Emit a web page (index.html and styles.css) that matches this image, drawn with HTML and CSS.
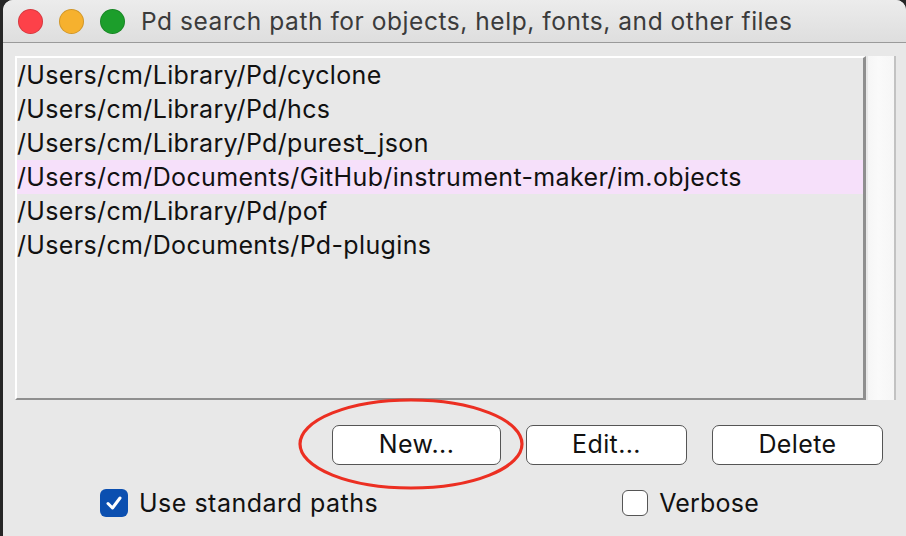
FILE: index.html
```html
<!DOCTYPE html>
<html>
<head>
<meta charset="utf-8">
<link rel="stylesheet" href="styles.css">
</head>
<body>
<div class="window">
  <div class="titlebar">
    <div class="lights">
      <span class="light red"></span>
      <span class="light yellow"></span>
      <span class="light green"></span>
    </div>
    <div class="title">Pd search path for objects, help, fonts, and other files</div>
  </div>
  <div class="content">
    <div class="listarea">
      <div class="listbox">
        <div class="row">/Users/cm/Library/Pd/cyclone</div>
        <div class="row">/Users/cm/Library/Pd/hcs</div>
        <div class="row">/Users/cm/Library/Pd/purest_json</div>
        <div class="row selected">/Users/cm/Documents/GitHub/instrument-maker/im.objects</div>
        <div class="row">/Users/cm/Library/Pd/pof</div>
        <div class="row">/Users/cm/Documents/Pd-plugins</div>
      </div>
      <div class="scrollbar"></div>
    </div>
    <div class="buttons">
      <button class="btn btn-new">New...</button>
      <button class="btn btn-edit">Edit...</button>
      <button class="btn btn-delete">Delete</button>
    </div>
    <div class="checks">
      <label class="check check-std"><span class="box checked"><svg viewBox="0 0 28 28" width="28" height="28"><path d="M8 14.5 L12.5 19 L20 9" fill="none" stroke="#fff" stroke-width="3" stroke-linecap="round" stroke-linejoin="round"/></svg></span>Use standard paths</label>
      <label class="check check-verbose"><span class="box"></span>Verbose</label>
    </div>
    <svg class="annot" width="240" height="100" viewBox="0 0 240 100"><ellipse cx="120" cy="50" rx="111" ry="44" fill="none" stroke="#ec2f22" stroke-width="3.2"/></svg>
  </div>
</div>
</body>
</html>
```
FILE: styles.css
```css
html, body {
  margin: 0;
  padding: 0;
  background: #262626;
  width: 906px;
  height: 536px;
  overflow: hidden;
}
.window {
  margin-left: 3px;
  width: 903px;
  height: 536px;
  background: #e8e8e8;
  border-radius: 10px 10px 0 0;
  overflow: hidden;
  font-family: Inter, "Liberation Sans", sans-serif;
  color: #111;
}
.titlebar {
  height: 42px;
  border-bottom: 1px solid #9a9a9a;
  background: linear-gradient(#ececec, #dedede);
  display: flex;
  align-items: center;
}
.lights {
  display: flex;
  gap: 16px;
  margin-left: 15px;
}
.light {
  width: 23px;
  height: 23px;
  border-radius: 50%;
  border: 0.5px solid rgba(0,0,0,0.15);
}
.red { background: #fd4149; }
.yellow { background: #f6b12e; }
.green { background: #1c9e2b; }
.title {
  margin-left: 16px;
  font-size: 24.5px;
  color: #3b3b3b;
  letter-spacing: 0.55px;
}
.content {
  position: relative;
  padding: 13px 10px 0 12px;
}
.listarea {
  display: flex;
  height: 344px;
}
.listbox {
  width: 851px;
  border-top: 2px solid #ffffff;
  border-left: 2px solid #ffffff;
  border-right: 3px solid #8f8f8f;
  border-bottom: 2px solid #8f8f8f;
  box-sizing: border-box;
  height: 344px;
}
.row {
  height: 34px;
  line-height: 34px;
  font-size: 25px;
  letter-spacing: 0.35px;
  white-space: nowrap;
  color: #111;
}
.row.selected {
  background: #f6e0fa;
}
.scrollbar {
  margin-left: 2px;
  width: 26px;
  height: 344px;
  background: linear-gradient(90deg, #f6f6f6, #fafafa 40%, #f6f6f6);
  border-right: 2px solid #c2c2c2;
}
.buttons {
  display: flex;
  gap: 25px;
  margin-top: 25px;
  margin-left: 317px;
}
.btn {
  height: 40px;
  background: #fff;
  border: 1.5px solid #555;
  border-radius: 7px;
  font-family: Inter, "Liberation Sans", sans-serif;
  font-size: 25px;
  letter-spacing: 0.4px;
  color: #111;
  padding: 0 0 2px 0;
}
.btn-new { width: 169px; }
.btn-edit { width: 161px; }
.btn-delete { width: 171px; }
.checks {
  display: flex;
  margin-top: 23px;
  margin-left: 85px;
}
.check {
  display: flex;
  align-items: center;
  gap: 11px;
  font-size: 25px;
  letter-spacing: 0.5px;
  color: #111;
}
.check-verbose {
  margin-left: 244px;
  letter-spacing: 0.2px;
}
.box {
  width: 26px;
  height: 26px;
  border: 1.5px solid #555;
  border-radius: 6px;
  background: #fff;
  box-sizing: border-box;
  display: flex;
  align-items: center;
  justify-content: center;
}
.box.checked {
  width: 28px;
  height: 28px;
  background: #0b4fb0;
  border: none;
}
.annot {
  position: absolute;
  left: 288px;
  top: 351px;
}
```
